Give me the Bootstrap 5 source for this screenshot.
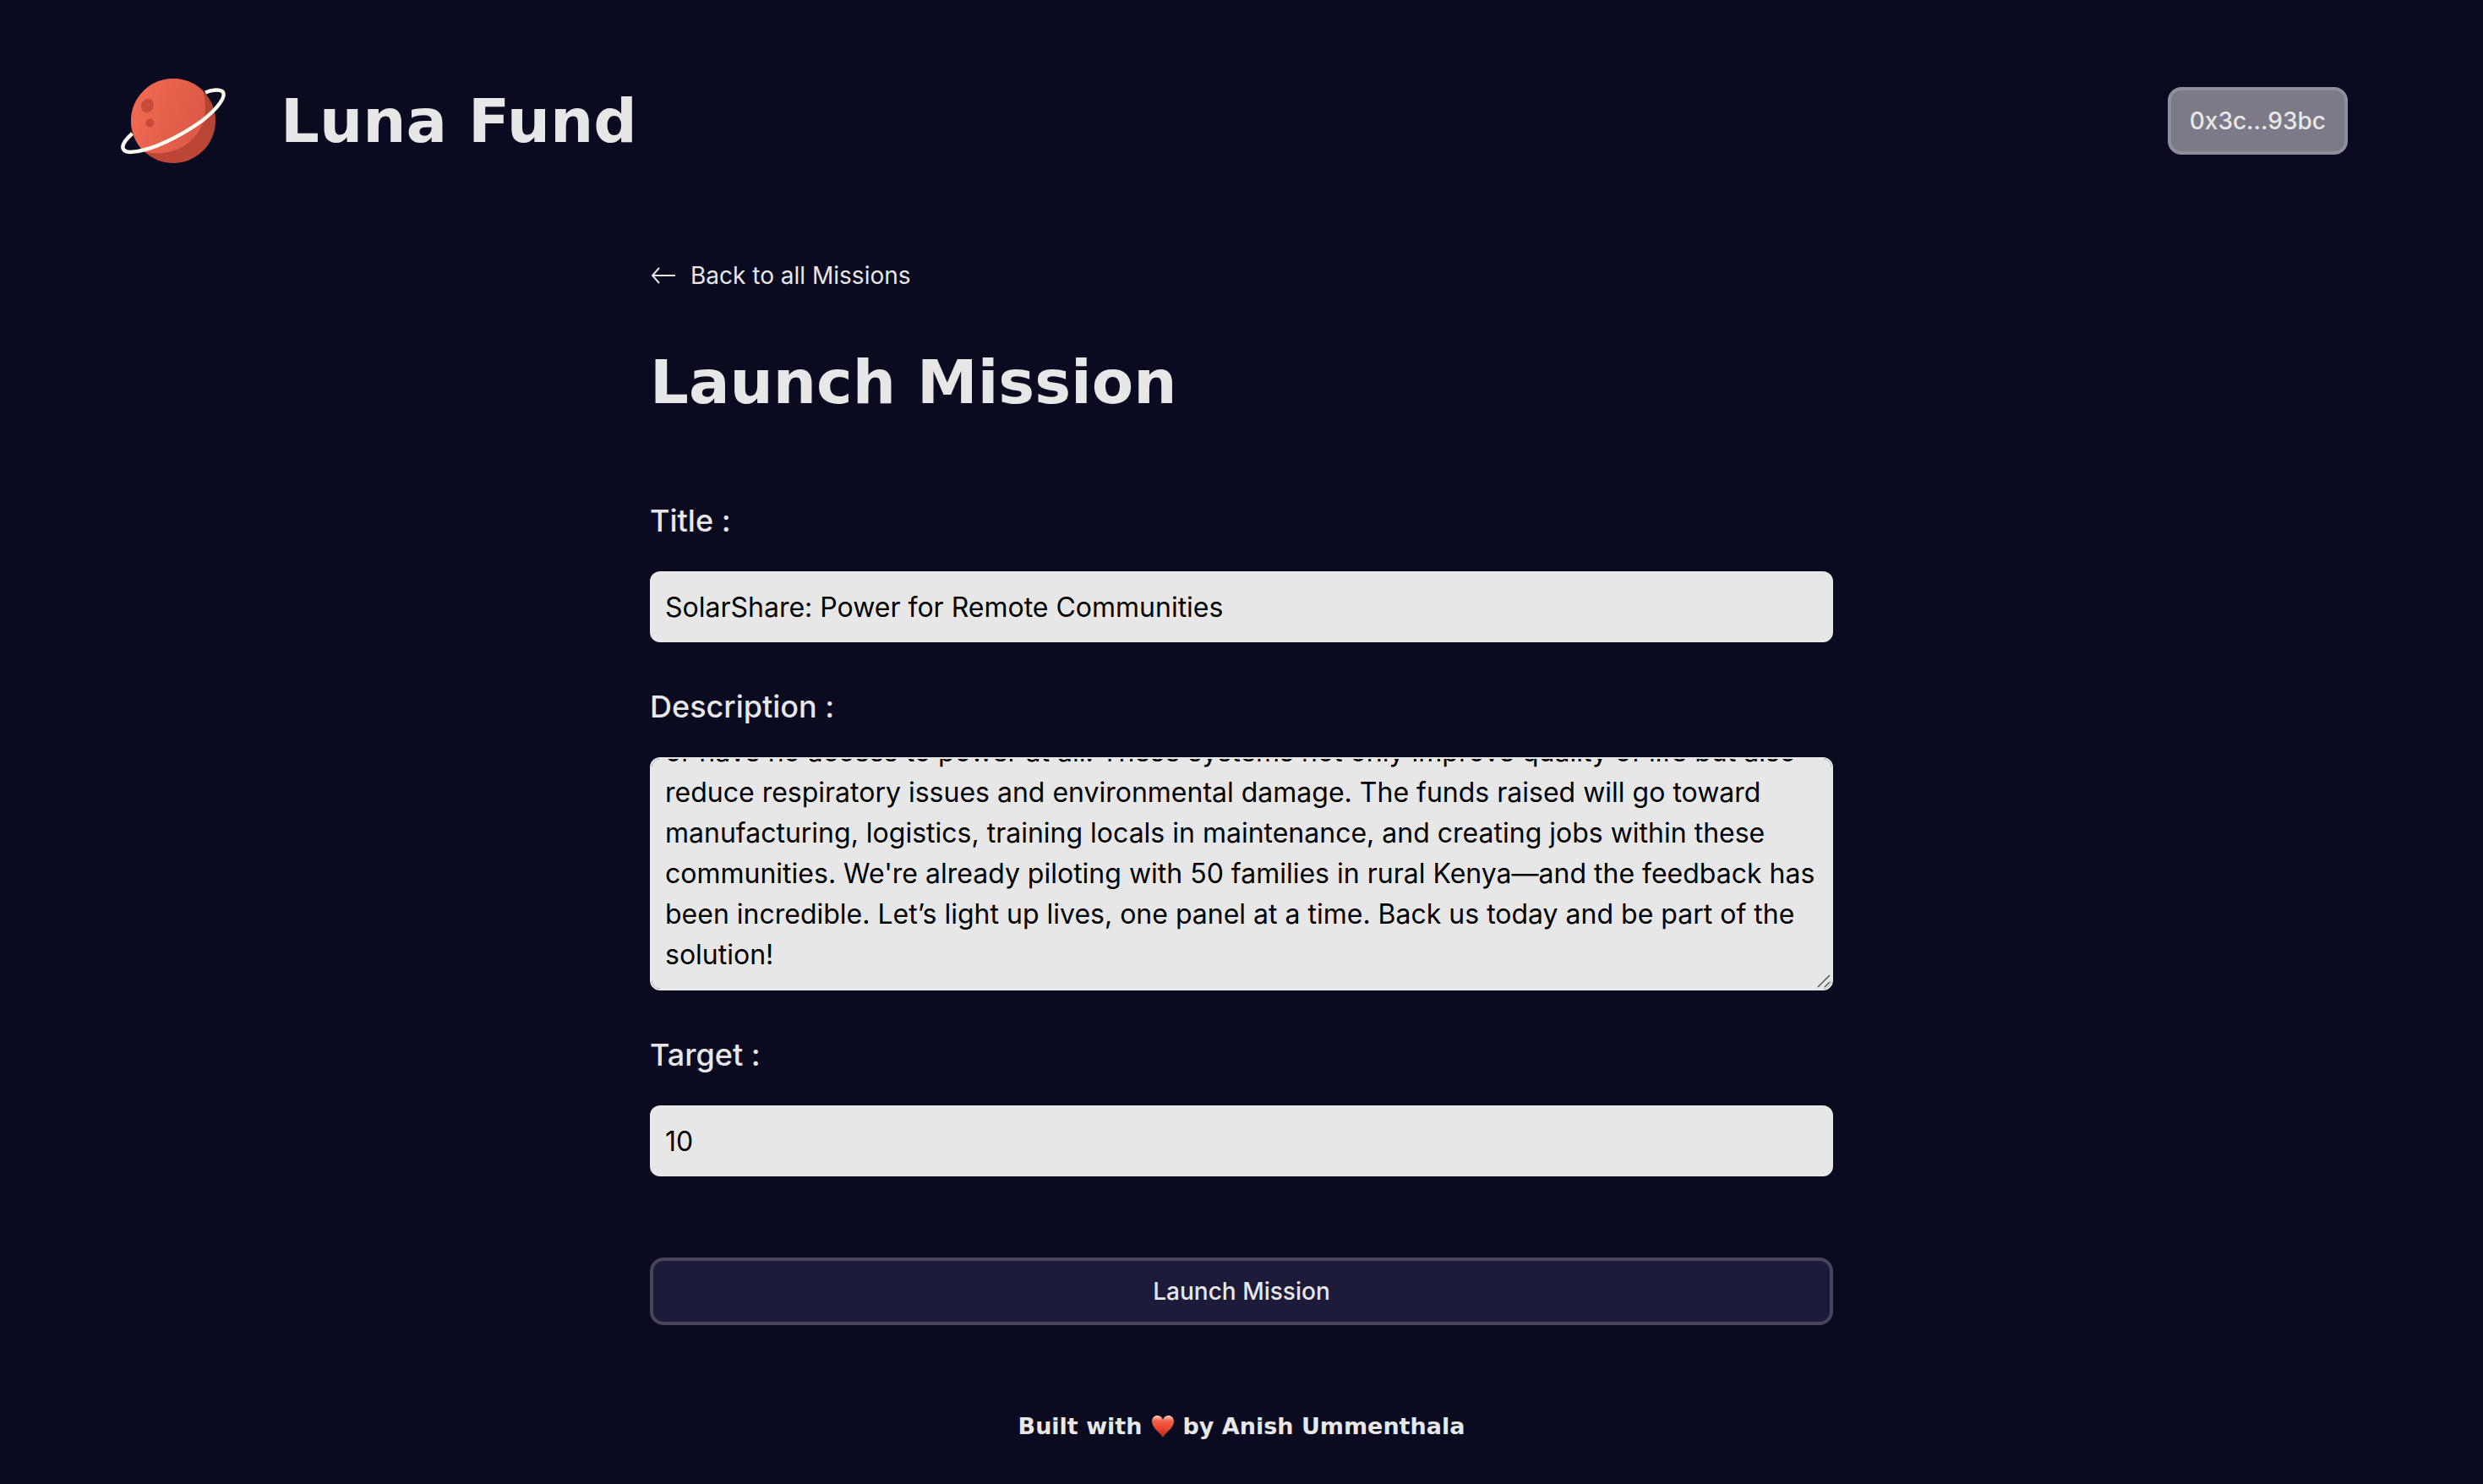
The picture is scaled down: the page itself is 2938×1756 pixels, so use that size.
<!DOCTYPE html>
<html lang="en">
<head>
<meta charset="utf-8">
<meta name="viewport" content="width=device-width, initial-scale=1">
<title>Luna Fund – Launch Mission</title>
<link href="https://cdn.jsdelivr.net/npm/bootstrap@5.3.0/dist/css/bootstrap.min.css" rel="stylesheet">
<style>
  :root { --night: #0a0a20; --fog: #e7e7e7; }
  body { background: var(--night); color: var(--fog); font-family: Inter, "Liberation Sans", sans-serif; font-size: 28px; line-height: 40px; }
  .site-header { padding: 78px 160px 98px 140px; }
  .logo { width: 130px; height: 130px; }
  .brand { gap: 62px; }
  .display-face { font-family: "DejaVu Sans", sans-serif; font-weight: 700; }
  .headline { font-size: 72px; line-height: 88px; }
  .btn-lunar { --bs-btn-color: var(--fog); --bs-btn-hover-color: #fff; --bs-btn-active-color: #fff; height: 80px; border-width: 4px; border-radius: 16px; font-size: 28px; line-height: 40px; font-weight: 500; padding: 16px 22px; }
  .btn-wallet { --bs-btn-bg: #7b7a86; --bs-btn-border-color: #908f99; --bs-btn-hover-bg: #878692; --bs-btn-hover-border-color: #9c9ba5; }
  .btn-launch { --bs-btn-bg: #1c1c3a; --bs-btn-border-color: #464559; --bs-btn-hover-bg: #27274a; --bs-btn-hover-border-color: #565569; }
  .mission { max-width: 1400px; }
  .back { gap: 16px; }
  .mission-title { margin: 56px 0 96px; }
  .field { margin-bottom: 52px; }
  .field .form-label { font-size: 36px; line-height: 48px; font-weight: 500; margin-bottom: 36px; }
  .field .form-control { background: var(--fog); border: 2px solid var(--fog); border-radius: 12px; color: #000; font-size: 32px; line-height: 48px; padding: 16px; }
  .field input.form-control { height: 84px; }
  .field textarea.form-control { height: 276px; scrollbar-width: none; resize: none; }
  .field textarea::-webkit-scrollbar { display: none; }
  .grip { position: absolute; right: 2px; bottom: 2px; width: 18px; height: 18px; pointer-events: none; }
  .submit-row { padding-top: 44px; }
  .site-footer { padding: 100px 0 48px; font-size: 27px; gap: 10px; }
</style>
<script src="https://cdn.jsdelivr.net/npm/bootstrap@5.3.0/dist/js/bootstrap.bundle.min.js"></script>
</head>
<body>
<header class="site-header d-flex justify-content-between align-items-center">
  <a href="#" class="brand d-flex align-items-center text-decoration-none text-reset">
    <svg class="logo" viewBox="10 -2 130 130" aria-hidden="true">
      <defs>
        <linearGradient id="lit" x1="0" x2="1" y1="0.2" y2="0.6"><stop stop-color="#f26b54"/><stop offset="1" stop-color="#dc5946"/></linearGradient>
        <linearGradient id="shade" x1="0" x2="0" y1="0" y2="1"><stop stop-color="#b14234"/><stop offset="1" stop-color="#bd4636"/></linearGradient>
        <clipPath id="globe"><circle cx="75" cy="63" r="50"/></clipPath>
      </defs>
      <circle cx="75" cy="63" r="50" fill="url(#shade)"/>
      <path clip-path="url(#globe)" fill="url(#lit)" d="M20 0H100C108 16 112 29 113 46C114 80 83 108 43 100L20 110Z"/>
      <ellipse cx="44.500" cy="45" rx="7.200" ry="8.500" transform="rotate(28 44.500 45)" fill="#c74c3c"/>
      <circle cx="47.500" cy="65.500" r="5" fill="#c74c3c"/>
      <path fill="none" stroke="#fffaf0" stroke-width="4.400" d="M113 29.500C121 26 130 25.500 133.500 28.500C138 34 128 48 109 63C85 80 50 99 24 100C12 99 12 91 26.500 78"/>
    </svg>
    <span class="display-face headline">Luna Fund</span>
  </a>
  <button type="button" class="btn btn-lunar btn-wallet">0x3c...93bc</button>
</header>

<main class="mission mx-auto">
  <a href="#" class="back d-inline-flex align-items-center text-decoration-none text-reset">
    <svg width="32" height="32" viewBox="0 0 32 32" fill="none" stroke="currentColor" stroke-width="2" aria-hidden="true"><path d="M30 16H3M11 7L3 16L11 25"/></svg>
    Back to all Missions
  </a>
  <h1 class="mission-title display-face headline">Launch Mission</h1>
  <form>
    <div class="field">
      <label class="form-label d-block" for="title">Title :</label>
      <input class="form-control" id="title" type="text" value="SolarShare: Power for Remote Communities">
    </div>
    <div class="field">
      <label class="form-label d-block" for="description">Description :</label>
      <div class="position-relative">
        <textarea class="form-control d-block" id="description">or have no access to power at all. These systems not only improve quality of life but also reduce respiratory issues and environmental damage. The funds raised will go toward manufacturing, logistics, training locals in maintenance, and creating jobs within these communities. We're already piloting with 50 families in rural Kenya—and the feedback has been incredible. Let’s light up lives, one panel at a time. Back us today and be part of the solution!</textarea>
        <svg class="grip" viewBox="0 0 18 18" fill="none" stroke="#555" stroke-width="1.500" aria-hidden="true"><path d="M2 16L16 2M10 16L16 10"/></svg>
      </div>
    </div>
    <div class="field">
      <label class="form-label d-block" for="target">Target :</label>
      <input class="form-control" id="target" type="text" inputmode="decimal" value="10">
    </div>
    <div class="submit-row">
      <button type="button" class="btn btn-lunar btn-launch w-100">Launch Mission</button>
    </div>
  </form>
</main>

<footer class="site-footer display-face d-flex justify-content-center align-items-center">
  <span>Built with</span>
  <svg width="28" height="28" viewBox="0 0 28 28" role="img" aria-label="love">
    <defs><linearGradient id="heart" x1="0" x2="0" y1="0" y2="1"><stop stop-color="#fbd0c4"/><stop offset="0.250" stop-color="#f2614b"/><stop offset="0.600" stop-color="#ea4330"/><stop offset="1" stop-color="#a52a1c"/></linearGradient></defs>
    <path fill="url(#heart)" d="M14 27C10 20 1 16 1 8C1 -1 12 -1 14 6C16 -1 27 -1 27 8C27 16 18 20 14 27Z"/>
  </svg>
  <span>by Anish Ummenthala</span>
</footer>
<script>
  const description = document.getElementById('description');
  description.scrollTop = description.scrollHeight;
</script>
</body>
</html>
